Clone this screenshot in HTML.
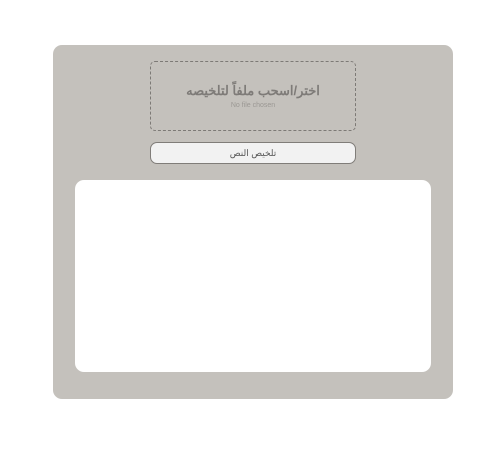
<!DOCTYPE html>
<html><head><meta charset="utf-8"><style>
body{margin:0;width:501px;height:471px;background:#fff;font-family:"Liberation Sans","Noto Sans CJK SC",sans-serif;position:relative}
.p{position:absolute;left:53px;top:45px;width:400px;height:354px;background:#c4c1bc;border-radius:9px}
.d{position:absolute;left:150px;top:61px;width:204px;height:68px;border:1.5px dashed #7d7a76;border-radius:5px;text-align:center}
.d .t{margin-top:21px;font-size:13px;color:#7e7b78;font-weight:bold}
.d .s{font-size:7px;color:#9b9894;margin-top:3px}
.b{position:absolute;left:150px;top:142px;width:204px;height:20px;border:1px solid #807d79;border-radius:7px;background:#f2f2f2;text-align:center;font-size:9px;line-height:20px;color:#555}
.w{position:absolute;left:75px;top:180px;width:356px;height:192px;background:#fff;border-radius:9px}
</style></head><body>
<div class="p"></div>
<div class="d"><div class="t" dir="rtl">اختر/اسحب ملفاً لتلخيصه</div><div class="s">No file chosen</div></div>
<div class="b" dir="rtl">تلخيص النص</div>
<div class="w"></div>
</body></html>
